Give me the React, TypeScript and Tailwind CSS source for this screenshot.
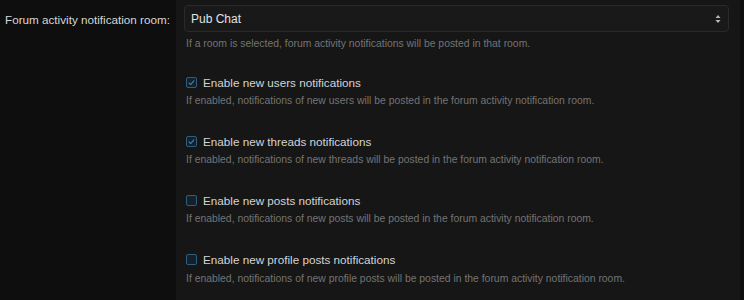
import React from 'react';

const rows = [
  { label: 'Enable new users notifications', hint: 'If enabled, notifications of new users will be posted in the forum activity notification room.', checked: true },
  { label: 'Enable new threads notifications', hint: 'If enabled, notifications of new threads will be posted in the forum activity notification room.', checked: true },
  { label: 'Enable new posts notifications', hint: 'If enabled, notifications of new posts will be posted in the forum activity notification room.', checked: false },
  { label: 'Enable new profile posts notifications', hint: 'If enabled, notifications of new profile posts will be posted in the forum activity notification room.', checked: false },
];

const Checkbox: React.FC<{ checked: boolean }> = ({ checked }) => (
  <span className="flex h-[11px] w-[11px] items-center justify-center rounded-[2px] border border-[#2f5f80] bg-[#14212b]">
    {checked && (
      <svg width="9" height="9" viewBox="0 0 10 10">
        <path d="M2 5.2 L4.2 7.3 L8 2.8" fill="none" stroke="#4a90c0" strokeWidth="1.2" />
      </svg>
    )}
  </span>
);

const App: React.FC = () => {
  return (
    <div className="flex h-[300px] w-[744px] bg-[#0e0e0e] font-['Liberation_Sans',Arial,sans-serif]">
      {/* label column */}
      <div className="w-[176px] shrink-0 whitespace-nowrap pr-[6px] pt-[11px] text-right text-[11.7px] text-[#d6d6d6]">
        Forum activity notification room:
      </div>

      {/* form column */}
      <div className="w-[564px] bg-[#161616] pl-[8px] pr-[11px] pt-[5px]">
        <div className="flex h-[27px] items-center justify-between rounded-[4px] border border-[#2a2a2a] bg-[#191919] pl-[6px] pr-[7px] text-[12px] text-[#e2e2e2]">
          <span>Pub Chat</span>
          <svg width="6" height="10" viewBox="0 0 6 10">
            <path d="M3 1 L5.5 4 L0.5 4 Z M3 9 L5.5 6 L0.5 6 Z" fill="#b8b8b8" />
          </svg>
        </div>
        <div className="mt-[4px] pl-[2px] text-[10.4px] text-[#747474]">
          If a room is selected, forum activity notifications will be posted in that room.
        </div>

        <div className="mt-[22px] flex flex-col gap-[24px]">
          {rows.map((r) => (
            <div key={r.label} className="flex flex-col">
              <label className="flex items-center gap-[6px] pl-[2px] text-[11.7px] text-[#d4d4d4]">
                <Checkbox checked={r.checked} />
                {r.label}
              </label>
              <div className="mt-[2px] pl-[2px] text-[10.4px] text-[#747474]">{r.hint}</div>
            </div>
          ))}
        </div>
      </div>
      <div className="flex-1 bg-[#0e0e0e]" />
    </div>
  );
};

export default App;
